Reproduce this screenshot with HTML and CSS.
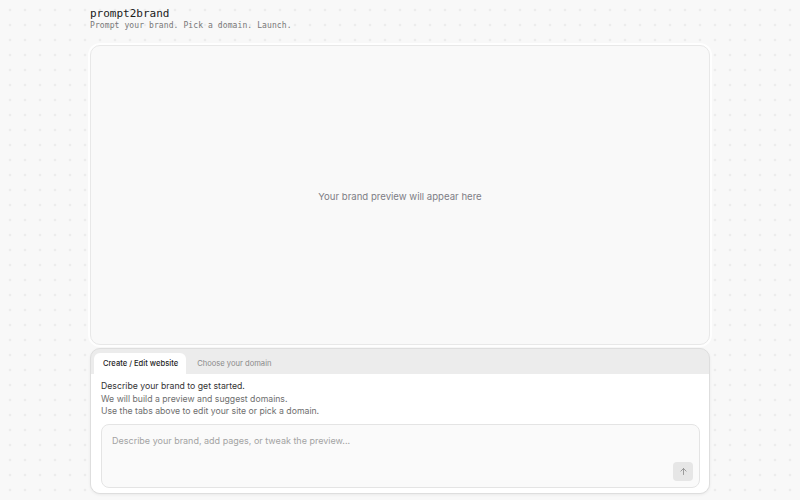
FILE: index.html
```html
<!DOCTYPE html>
<html lang="en">
<head>
    <meta charset="UTF-8">
    <meta name="viewport" content="width=device-width, initial-scale=1.0">
    <title>prompt2brand</title>
    <link rel="stylesheet" href="styles.css">
</head>
<body>

    <div class="page">
        <header class="header">
            <h1 class="title">prompt2brand</h1>
            <p class="tagline">Prompt your brand. Pick a domain. Launch.</p>
        </header>

        <!-- Preview area -->
        <section class="preview">
            <p>Your brand preview will appear here</p>
        </section>

        <!-- Prompt panel -->
        <section class="panel">
            <div class="tabs">
                <button class="tab active">Create / Edit website</button>
                <button class="tab">Choose your domain</button>
            </div>
            <div class="panel-body">
                <p class="intro">Describe your brand to get started.</p>
                <p class="hint">We will build a preview and suggest domains.</p>
                <p class="hint">Use the tabs above to edit your site or pick a domain.</p>
                <div class="composer">
                    <textarea placeholder="Describe your brand, add pages, or tweak the preview..."></textarea>
                    <button class="send" title="Send">
                        <svg width="9" height="9" viewBox="0 0 24 24" fill="none" stroke="currentColor" stroke-width="2.2" stroke-linecap="round" stroke-linejoin="round">
                            <path d="M12 20V4"/>
                            <path d="M5 11l7-7 7 7"/>
                        </svg>
                    </button>
                </div>
            </div>
        </section>
    </div>

</body>
</html>
```

FILE: styles.css
```css
body {
    margin: 0;
    height: 100vh;
    overflow: hidden;
    font-family: 'Inter', 'Liberation Sans', sans-serif;
    background-color: #f8f8f8;
    background-image: radial-gradient(circle, #dcdcdc 0.8px, transparent 1.1px);
    background-size: 15px 15px;
    background-position: 2.5px 2.5px;
}

.page {
    width: 620px;
    margin: 0 auto;
    padding-top: 7px;
    display: flex;
    flex-direction: column;
}

/* Header */
.header {
    height: 38px;
}
.title {
    margin: 0;
    font-family: 'DejaVu Sans Mono', 'Liberation Mono', monospace;
    font-size: 11px;
    font-weight: normal;
    color: #1a1a1a;
    line-height: 14px;
}
.tagline {
    margin: 0;
    font-family: 'DejaVu Sans Mono', 'Liberation Mono', monospace;
    font-size: 8px;
    letter-spacing: 0.1px;
    color: #777;
    line-height: 10px;
}

/* Preview */
.preview {
    height: 298px;
    background: #f9f9f9;
    border: 1px solid #e8e8e8;
    border-radius: 10px;
    box-shadow: 0 0 0 2px rgba(255, 255, 255, 0.8);
    display: flex;
    justify-content: center;
    align-items: center;
}
.preview p {
    margin: 2px 0 0;
    font-size: 9.6px;
    color: #7d7d85;
}

/* Panel */
.panel {
    margin-top: 3px;
    background: #ececec;
    border: 1px solid #dedede;
    border-radius: 10px;
    overflow: hidden;
    box-shadow: 0 1px 3px rgba(0, 0, 0, 0.06);
}
.tabs {
    display: flex;
    padding: 4px 3px 0;
    gap: 2px;
}
.tab {
    font-family: inherit;
    font-size: 7.6px;
    color: #8a8a8a;
    background: transparent;
    border: none;
    height: 21px;
    padding: 0 8px 0 9px;
    border-radius: 6px 6px 0 0;
    cursor: pointer;
}
.tab.active {
    background: #fff;
    color: #1f1f1f;
    font-weight: 500;
}

.panel-body {
    background: #fff;
    padding: 6px 9px 5px 10px;
}
.intro, .hint {
    margin: 0;
    font-size: 8.7px;
    line-height: 12.5px;
}
.intro {
    color: #333;
}
.hint {
    color: #6e6e6e;
}

.composer {
    position: relative;
    margin-top: 6px;
}
textarea {
    display: block;
    box-sizing: border-box;
    width: 100%;
    height: 64px;
    resize: none;
    font-family: inherit;
    font-size: 9px;
    padding: 10px 10px;
    background: #fafafa;
    border: 1px solid #e4e4e4;
    border-radius: 8px;
    outline: none;
}
textarea::placeholder {
    color: #a3a3a3;
}
.send {
    position: absolute;
    right: 7px;
    bottom: 7px;
    width: 20px;
    height: 19px;
    border: none;
    border-radius: 4px;
    background: #e6e6e6;
    color: #8a8a8a;
    display: flex;
    justify-content: center;
    align-items: center;
    padding: 0;
}
```
